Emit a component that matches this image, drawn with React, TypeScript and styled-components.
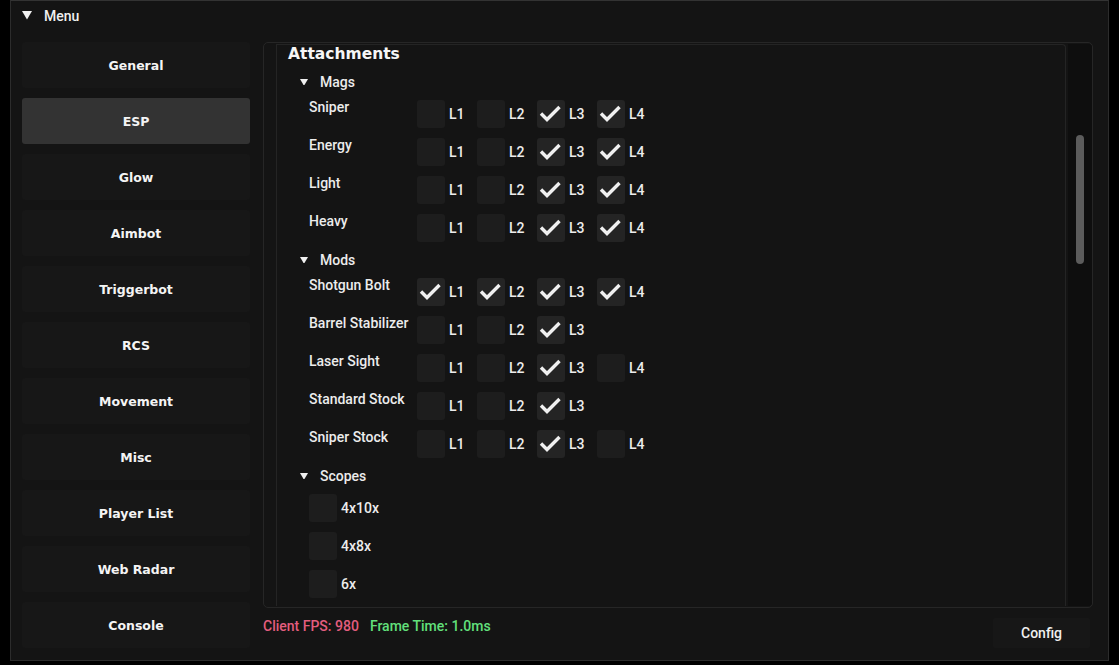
import React from 'react';
import styled, {createGlobalStyle} from 'styled-components';

const GlobalStyle = createGlobalStyle`
  html, body {
    margin: 0;
    padding: 0;
    background: #000;
    height: 100%;
  }
  body {
    font-family: Roboto, "Liberation Sans", sans-serif;
    color: #ececec;
  }
`;

const WindowStyles = styled.div`
  margin-left: 10px;
  width: 1099px;
  height: 661px;
  box-sizing: border-box;
  border: 1px solid #2c2c2c;
  border-top-color: #333;
  background: #141414;
  display: flex;
  flex-direction: column;
`;

const TitleBar = styled.div`
  height: 29px;
  display: flex;
  align-items: center;
  padding-left: 11px;
  gap: 12px;
  font-size: 14px;
  font-weight: 500;
  color: #f0f0f0;
`;

const Body = styled.div`
  flex: 1;
  display: flex;
  padding: 12px 15px 0 11px;
  gap: 13px;
`;

const Sidebar = styled.nav`
  width: 228px;
  display: flex;
  flex-direction: column;
  gap: 10px;
`;

const NavButton = styled.div<{ $active?: boolean }>`
  height: 46px;
  display: flex;
  align-items: center;
  justify-content: center;
  border-radius: 3px;
  background: ${(p) => (p.$active ? '#333333' : '#171717')};
  font-family: "DejaVu Sans", Verdana, sans-serif;
  font-weight: bold;
  font-size: 12.5px;
  color: #f4f4f4;
`;

const MainColumn = styled.div`
  flex: 1;
  display: flex;
  flex-direction: column;
`;

const Panel = styled.div`
  height: 566px;
  box-sizing: border-box;
  border: 1px solid #262626;
  border-radius: 5px;
  padding: 1px 0 1px 12px;
  display: flex;
`;

const ContentBox = styled.div`
  flex: 1;
  border: 1px solid #242424;
  border-bottom: none;
  border-radius: 0 4px 0 0;
  padding: 0 11px;
  overflow: hidden;
  display: flex;
  flex-direction: column;
  gap: 10px;
`;

const Heading = styled.div`
  height: 19px;
  line-height: 19px;
  font-family: "DejaVu Sans", Verdana, sans-serif;
  font-weight: bold;
  font-size: 15.5px;
  color: #f6f6f6;
`;

const TreeHeader = styled.div`
  height: 16px;
  display: flex;
  align-items: center;
  gap: 12px;
  padding-left: 12px;
  font-size: 14px;
  font-weight: 500;
`;

const OptionRow = styled.div<{ $center?: boolean }>`
  height: 28px;
  display: flex;
  align-items: ${(p) => (p.$center ? 'center' : 'flex-start')};
  padding-left: 21px;
  font-size: 14px;
  font-weight: 500;
`;

const RowLabel = styled.div`
  width: 108px;
  line-height: 16px;
  margin-top: -1px;
`;

const Option = styled.div<{ $auto?: boolean }>`
  width: ${(p) => (p.$auto ? 'auto' : '60px')};
  display: flex;
  align-items: center;
  gap: 4px;
  height: 28px;
`;

const Box = styled.div<{ $checked?: boolean }>`
  width: 28px;
  height: 28px;
  border-radius: 3px;
  background: ${(p) => (p.$checked ? '#242424' : '#1d1d1d')};
  flex: none;
  display: flex;
`;

const ScrollTrack = styled.div`
  width: 24px;
  margin-left: 2px;
  background: #0e0e0e;
  border-radius: 0 4px 4px 0;
  display: flex;
  justify-content: center;
  padding-top: 91px;
  box-sizing: border-box;
`;

const ScrollGrab = styled.div`
  width: 8px;
  height: 129px;
  border-radius: 4px;
  background: #5c5c5c;
`;

const Footer = styled.div`
  display: flex;
  align-items: flex-start;
  padding-top: 10px;
  font-size: 14px;
  font-weight: 500;
`;

const Stat = styled.span<{ $color: string }>`
  color: ${(p) => p.$color};
  line-height: 17px;
  margin-right: 11px;
`;

const ConfigButton = styled.div`
  margin-left: auto;
  margin-right: 3px;
  width: 97px;
  height: 30px;
  display: flex;
  align-items: center;
  justify-content: center;
  background: #171717;
  border-radius: 2px;
  color: #f0f0f0;
`;

const Triangle = ({size}: { size: number }) => (
  <svg width={size} height={size * 0.85} viewBox="0 0 10 8.5">
    <polygon points="0,0 10,0 5,8.5" fill="#f0f0f0" />
  </svg>
);

const Check = () => (
  <svg width="28" height="28" viewBox="0 0 28 28">
    <polyline points="4,13.5 10,19.5 22.5,7" fill="none" stroke="#f0f0f0" strokeWidth="3.4" />
  </svg>
);

const navItems = ['General', 'ESP', 'Glow', 'Aimbot', 'Triggerbot', 'RCS', 'Movement', 'Misc', 'Player List', 'Web Radar', 'Console'];

const groups = [
  {
    name: 'Mags',
    rows: [
      {label: 'Sniper', levels: [false, false, true, true]},
      {label: 'Energy', levels: [false, false, true, true]},
      {label: 'Light', levels: [false, false, true, true]},
      {label: 'Heavy', levels: [false, false, true, true]},
    ],
  },
  {
    name: 'Mods',
    rows: [
      {label: 'Shotgun Bolt', levels: [true, true, true, true]},
      {label: 'Barrel Stabilizer', levels: [false, false, true]},
      {label: 'Laser Sight', levels: [false, false, true, false]},
      {label: 'Standard Stock', levels: [false, false, true]},
      {label: 'Sniper Stock', levels: [false, false, true, false]},
    ],
  },
];

const scopes = ['4x10x', '4x8x', '6x'];

export default function App() {
  return (
    <>
      <GlobalStyle />
      <WindowStyles>
        <TitleBar>
          <Triangle size={10} />
          <span>Menu</span>
        </TitleBar>
        <Body>
          <Sidebar>
            {navItems.map((item) => (
              <NavButton key={item} $active={item == 'ESP'}>{item}</NavButton>
            ))}
          </Sidebar>
          <MainColumn>
            <Panel>
              <ContentBox>
                <Heading>Attachments</Heading>
                {groups.map((group) => (
                  <React.Fragment key={group.name}>
                    <TreeHeader>
                      <Triangle size={8} />
                      <span>{group.name}</span>
                    </TreeHeader>
                    {group.rows.map((row) => (
                      <OptionRow key={row.label}>
                        <RowLabel>{row.label}</RowLabel>
                        {row.levels.map((on, i) => (
                          <Option key={i}>
                            <Box $checked={on}>{on && <Check />}</Box>
                            <span>L{i + 1}</span>
                          </Option>
                        ))}
                      </OptionRow>
                    ))}
                  </React.Fragment>
                ))}
                <TreeHeader>
                  <Triangle size={8} />
                  <span>Scopes</span>
                </TreeHeader>
                {scopes.map((s) => (
                  <OptionRow key={s} $center>
                    <Option $auto>
                      <Box />
                      <span>{s}</span>
                    </Option>
                  </OptionRow>
                ))}
              </ContentBox>
              <ScrollTrack>
                <ScrollGrab />
              </ScrollTrack>
            </Panel>
            <Footer>
              <Stat $color="#e35d7e">Client FPS: 980</Stat>
              <Stat $color="#62e07c">Frame Time: 1.0ms</Stat>
              <ConfigButton>Config</ConfigButton>
            </Footer>
          </MainColumn>
        </Body>
      </WindowStyles>
    </>
  );
}
